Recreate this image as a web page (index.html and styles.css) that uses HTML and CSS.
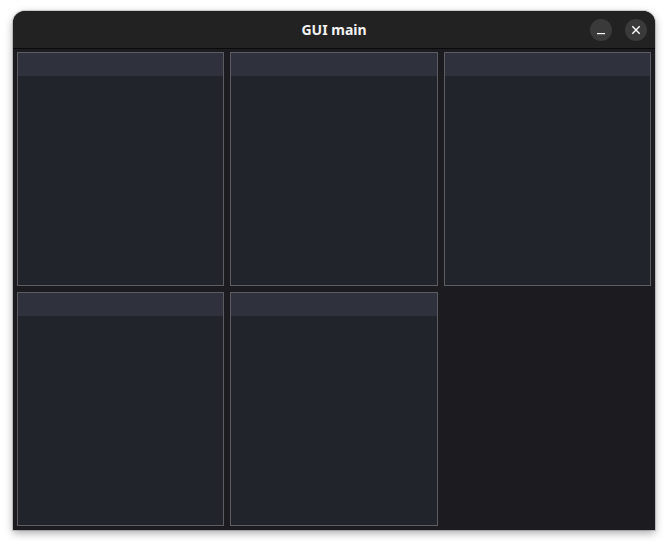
FILE: index.html
```html
<!DOCTYPE html>
<html>
<head>
<meta charset="utf-8">
<link rel="stylesheet" href="styles.css">
</head>
<body>
<div class="window">
  <div class="titlebar">
    <div class="title">GUI main</div>
    <div class="controls">
      <div class="btn">
        <svg width="22" height="22" viewBox="0 0 22 22"><rect x="7" y="14" width="8" height="1.2" fill="#ffffff"/></svg>
      </div>
      <div class="btn">
        <svg width="22" height="22" viewBox="0 0 22 22"><path d="M7.3 7.3 L14.7 14.7 M14.7 7.3 L7.3 14.7" stroke="#ffffff" stroke-width="1.4"/></svg>
      </div>
    </div>
  </div>
  <div class="content">
    <div class="panel"><div class="phead"></div></div>
    <div class="panel"><div class="phead"></div></div>
    <div class="panel"><div class="phead"></div></div>
    <div class="panel"><div class="phead"></div></div>
    <div class="panel"><div class="phead"></div></div>
  </div>
</div>
</body>
</html>
```
FILE: styles.css
```css
html, body {
  margin: 0;
  padding: 0;
  background: #ffffff;
}
body {
  padding: 11px 13px;
  font-family: "Noto Sans", "DejaVu Sans", sans-serif;
}
.window {
  width: 642px;
  height: 519px;
  background: #1c1b20;
  border-radius: 12px 12px 0 0;
  box-shadow: 0 3px 9px rgba(0,0,0,0.35), 0 0 0 1px rgba(0,0,0,0.15);
  display: flex;
  flex-direction: column;
  overflow: hidden;
}
.titlebar {
  height: 37px;
  background: #222222;
  border-bottom: 1px solid #0a0a0a;
  position: relative;
  display: flex;
  align-items: center;
  justify-content: center;
  flex-shrink: 0;
}
.title {
  color: #f2f2f2;
  font-size: 14px;
  font-weight: 700;
  letter-spacing: 0;
}
.controls {
  position: absolute;
  right: 8px;
  top: 8px;
  display: flex;
  gap: 13px;
}
.btn {
  width: 22px;
  height: 22px;
  border-radius: 50%;
  background: #3a3a3a;
}
.btn svg { display: block; }
.content {
  padding: 3px 4px 4px 4px;
  display: grid;
  grid-template-columns: 207px 208px 207px;
  grid-template-rows: 234px 234px;
  gap: 6px;
}
.panel {
  border: 1px solid #5c5c62;
  background: #22242b;
}
.phead {
  height: 23px;
  background: #2f313c;
}
```
